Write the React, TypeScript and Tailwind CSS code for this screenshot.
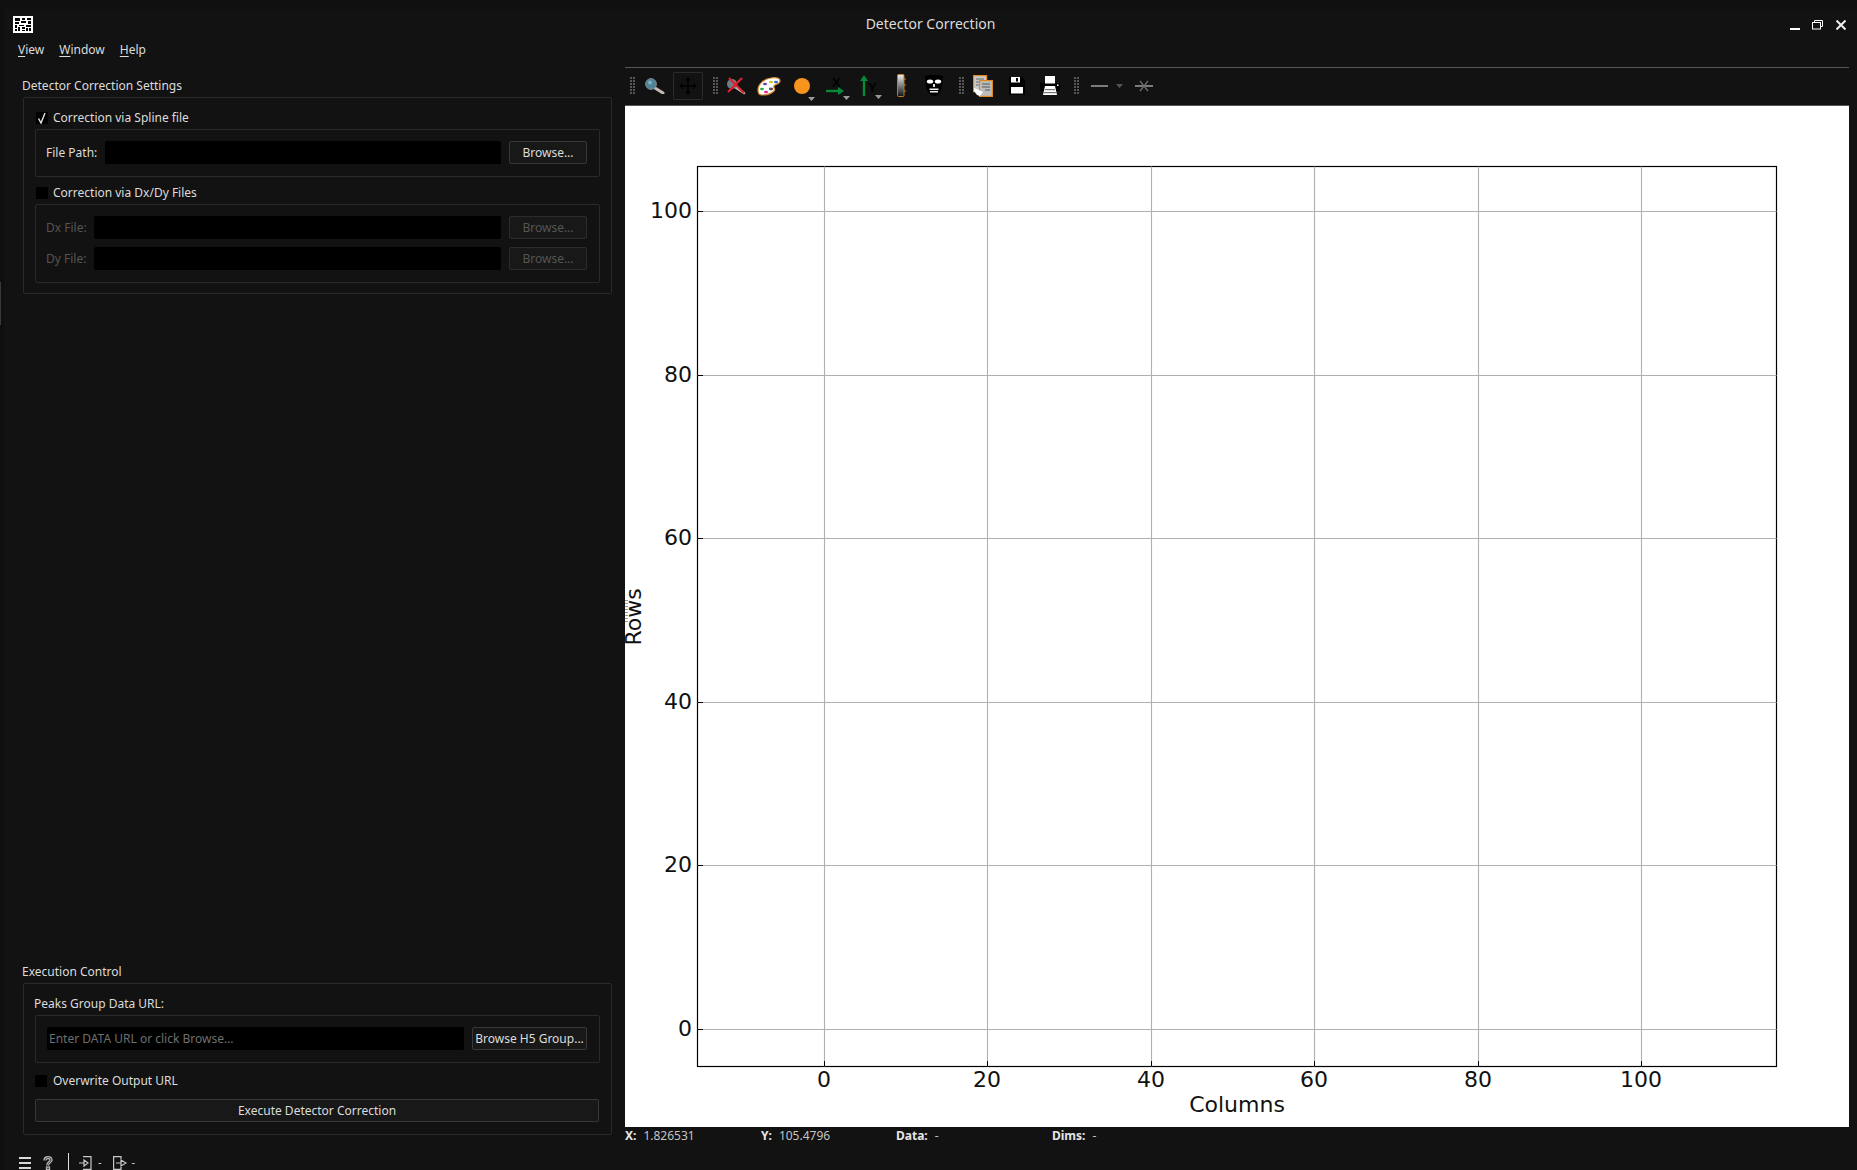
import type { ReactNode } from "react";

const xTicks = [
  { x: 199.5, label: "0" },
  { x: 362.5, label: "20" },
  { x: 526.5, label: "40" },
  { x: 689.5, label: "60" },
  { x: 853.5, label: "80" },
  { x: 1016.5, label: "100" },
];

const yTicks = [
  { y: 923.5, label: "0" },
  { y: 759.5, label: "20" },
  { y: 596.5, label: "40" },
  { y: 432.5, label: "60" },
  { y: 269.5, label: "80" },
  { y: 105.5, label: "100" },
];

function Chart() {
  return (
    <svg width="1224" height="1021" viewBox="0 0 1224 1021" className="block">
      <rect x="72.5" y="60.5" width="1079" height="900" fill="white" stroke="black" strokeWidth="1.2" />
      {xTicks.map((t) => (
        <g key={t.label}>
          <line x1={t.x} x2={t.x} y1="60.5" y2="960.5" stroke="#b0b0b0" strokeWidth="1.1" />
          <line x1={t.x} x2={t.x} y1="955" y2="960.5" stroke="black" />
          <text x={t.x - 0.5} y="981" textAnchor="middle" fontFamily="'DejaVu Sans', sans-serif" fontSize="22" fill="#111">
            {t.label}
          </text>
        </g>
      ))}
      {yTicks.map((t) => (
        <g key={t.label}>
          <line x1="72.5" x2="1151.5" y1={t.y} y2={t.y} stroke="#b0b0b0" strokeWidth="1.1" />
          <line x1="72.5" x2="78" y1={t.y} y2={t.y} stroke="black" />
          <text x="67" y={t.y + 6.5} textAnchor="end" fontFamily="'DejaVu Sans', sans-serif" fontSize="22" fill="#111">
            {t.label}
          </text>
        </g>
      ))}
      <text x="612" y="1006" textAnchor="middle" fontFamily="'DejaVu Sans', sans-serif" fontSize="22" fill="#111">
        Columns
      </text>
      <text
        transform="translate(16 511) rotate(-90)"
        textAnchor="middle"
        fontFamily="'DejaVu Sans', sans-serif"
        fontSize="22"
        fill="#111"
      >
        Rows
      </text>
    </svg>
  );
}

function Grip({ className = "" }: { className?: string }) {
  const dots = [0, 1, 2, 3, 4, 5];
  return (
    <svg width="5" height="17" viewBox="0 0 5 17" className={className}>
      {dots.map((d) => (
        <g key={d} fill="#565656">
          <rect x="0" y={d * 3} width="2" height="2" />
          <rect x="3" y={d * 3} width="2" height="2" />
        </g>
      ))}
    </svg>
  );
}

function Caret({ className = "", color = "#9a9a9a" }: { className?: string; color?: string }) {
  return (
    <svg width="7" height="4" viewBox="0 0 7 4" className={className}>
      <path d="M0 0h7L3.5 4z" fill={color} />
    </svg>
  );
}

function Magnifier() {
  return (
    <svg width="20" height="16" viewBox="0 0 20 16">
      <path d="M10 10l8 5" stroke="#c9b9b4" strokeWidth="3" strokeLinecap="round" />
      <circle cx="6" cy="6" r="5.4" fill="#4f8496" stroke="#7b8a90" strokeWidth="1" />
      <circle cx="5" cy="4.6" r="2" fill="#7fb0c0" />
    </svg>
  );
}

function PanIcon() {
  return (
    <svg width="18" height="18" viewBox="0 0 18 18" fill="#000" stroke="#000">
      <path d="M9 2v14M2 9h14" strokeWidth="1.6" fill="none" />
      <path d="M9 0l3 3.5H6zM9 18l3-3.5H6zM0 9l3.5-3v6zM18 9l-3.5-3v6z" stroke="none" />
    </svg>
  );
}

function NoZoom() {
  return (
    <svg width="20" height="18" viewBox="0 0 20 18">
      <path d="M9 10l9 6" stroke="#b8b8b8" strokeWidth="2.5" strokeLinecap="round" />
      <circle cx="6" cy="7" r="5" fill="#6d7d84" />
      <path d="M2 15L16 1M3 1l15 15" stroke="#e0202c" strokeWidth="2.2" />
    </svg>
  );
}

function Palette() {
  return (
    <svg width="24" height="20" viewBox="0 0 24 20">
      <path
        d="M1 14C1 8 7 3 14 2c5-1 9 0 9 3 0 3-5 3-6 5-1 2 2 3 0 5-3 3-9 4-12 4-3 0-4-2-4-5z"
        fill="#fff"
        stroke="#d98a2b"
        strokeWidth="1.2"
      />
      <ellipse cx="8" cy="8" rx="2" ry="1.3" fill="#6a3fb0" />
      <ellipse cx="14" cy="6" rx="2" ry="1.3" fill="#c8c820" />
      <ellipse cx="19" cy="6" rx="2" ry="1.3" fill="#2a6fc0" />
      <ellipse cx="5" cy="13" rx="2" ry="1.2" fill="#2ab04a" />
      <ellipse cx="9" cy="16" rx="2" ry="1.2" fill="#e02090" />
      <ellipse cx="14" cy="13" rx="2.2" ry="1.4" fill="#555" />
    </svg>
  );
}

function XAxisIcon() {
  return (
    <svg width="20" height="20" viewBox="0 0 20 20">
      <text x="6" y="11" fontFamily="'Liberation Sans', sans-serif" fontWeight="700" fontSize="13" fill="#000">
        X
      </text>
      <path d="M0 15h13" stroke="#06893a" strokeWidth="2.4" />
      <path d="M12 11l6 4-6 4z" fill="#06893a" />
    </svg>
  );
}

function YAxisIcon() {
  return (
    <svg width="22" height="22" viewBox="0 0 22 22">
      <path d="M5 5v16" stroke="#06893a" strokeWidth="2.4" />
      <path d="M1 6l4-6 4 6z" fill="#06893a" />
      <text x="9" y="17" fontFamily="'Liberation Sans', sans-serif" fontWeight="700" fontSize="13" fill="#000">
        Y
      </text>
    </svg>
  );
}

function Colorbar() {
  return (
    <svg width="9" height="23" viewBox="0 0 9 23">
      <defs>
        <linearGradient id="cb" x1="0" y1="0" x2="0" y2="1">
          <stop offset="0" stopColor="#eee" />
          <stop offset="1" stopColor="#111" />
        </linearGradient>
      </defs>
      <rect x="0.5" y="0.5" width="6.5" height="22" rx="1" fill="url(#cb)" stroke="#c47a22" />
      <path d="M7 5h2M7 11h2M7 17h2" stroke="#c47a22" />
    </svg>
  );
}

function Mask() {
  return (
    <svg width="18" height="21" viewBox="0 0 18 21">
      <path d="M0 1c6-1.500 12-1.500 18 0 0 9-2 20-9 20S0 10 0 1z" fill="#000" />
      <ellipse cx="5" cy="6.500" rx="3.200" ry="2.100" fill="#fff" />
      <ellipse cx="13" cy="6.500" rx="3.200" ry="2.100" fill="#fff" />
      <rect x="8" y="9" width="2" height="3" fill="#ddd" />
      <rect x="4.500" y="13.500" width="9" height="1.500" fill="#eee" />
      <rect x="5" y="16" width="8" height="1.500" fill="#eee" />
    </svg>
  );
}

function CopyIcon() {
  return (
    <svg width="20" height="22" viewBox="0 0 20 22">
      <rect x="0.600" y="0.600" width="13" height="16" fill="#c9c9c9" stroke="#e08a25" strokeWidth="1.200" />
      <path d="M3 4h8M3 7h8M3 10h6" stroke="#666" />
      <rect x="6.600" y="5.600" width="12.800" height="15.800" fill="#bdbdbd" stroke="#e08a25" strokeWidth="1.200" />
      <path d="M9 9h8M9 12h8M12 15h5" stroke="#555" />
      <path d="M1 13l5 2 4 2-3 4-3-1-3-4z" fill="#fff" />
    </svg>
  );
}

function SaveIcon() {
  return (
    <svg width="16" height="18" viewBox="0 0 16 18">
      <path d="M0 0h13l3 3v15H0z" fill="#000" />
      <rect x="2" y="0" width="9" height="5.500" fill="#fff" />
      <rect x="7" y="1" width="2" height="3.500" fill="#000" />
      <rect x="2" y="10" width="12" height="6.500" fill="#fff" />
    </svg>
  );
}

function PrintIcon() {
  return (
    <svg width="20" height="20" viewBox="0 0 20 20">
      <path d="M0 7h20v8H0z" fill="#000" />
      <rect x="5" y="0" width="10" height="7.500" fill="#fff" />
      <path d="M5 10h10l2 9H3z" fill="#fff" />
      <rect x="5" y="13" width="10" height="1.200" fill="#777" />
      <rect x="4" y="16" width="12" height="1.200" fill="#777" />
      <rect x="17" y="8.500" width="1.500" height="1.500" fill="#fff" />
    </svg>
  );
}

function StarLine() {
  return (
    <svg width="18" height="12" viewBox="0 0 18 12">
      <path d="M0 6h18" stroke="#7c7c7c" strokeWidth="2" />
      <path d="M5 1l8 10M13 1L5 11" stroke="#6a6a6a" strokeWidth="1.400" />
    </svg>
  );
}

function Toolbar() {
  return (
    <div className="flex h-[37px] items-center pb-[2px]">
      <Grip className="ml-[5px]" />
      <div className="ml-[10px]">
        <Magnifier />
      </div>
      <div className="ml-[8px] flex h-[28px] w-[30px] items-center justify-center rounded-[2px] border border-[#2c2c2c]">
        <PanIcon />
      </div>
      <Grip className="ml-[10px]" />
      <div className="ml-[8px]">
        <NoZoom />
      </div>
      <div className="ml-[11px]">
        <Palette />
      </div>
      <div className="relative ml-[13px] h-[16px] w-[16px] rounded-full bg-[#f7941d]">
        <Caret className="absolute left-[14px] top-[19px]" />
      </div>
      <div className="relative ml-[16px] h-[20px] w-[20px]">
        <XAxisIcon />
        <Caret className="absolute left-[17px] top-[20px]" />
      </div>
      <div className="relative ml-[13px] h-[22px] w-[20px]">
        <YAxisIcon />
        <Caret className="absolute left-[16px] top-[20px]" />
      </div>
      <div className="ml-[18px] flex">
        <Colorbar />
      </div>
      <div className="ml-[19px] flex">
        <Mask />
      </div>
      <Grip className="ml-[16px]" />
      <div className="ml-[9px] flex">
        <CopyIcon />
      </div>
      <div className="ml-[16px] flex">
        <SaveIcon />
      </div>
      <div className="ml-[15px] flex">
        <PrintIcon />
      </div>
      <Grip className="ml-[14px]" />
      <div className="ml-[12px] h-[2px] w-[17px] bg-[#7c7c7c]" />
      <Caret className="ml-[8px]" color="#555" />
      <div className="ml-[12px] flex">
        <StarLine />
      </div>
    </div>
  );
}

function Check({ checked = false }: { checked?: boolean }) {
  return (
    <span className="flex h-[12px] w-[12px] shrink-0 items-center justify-center bg-black">
      {checked && (
        <svg width="11" height="12" viewBox="0 0 11 12">
          <path d="M1.500 6.500L4 11l4-10" fill="none" stroke="#e6e6e6" strokeWidth="1.400" />
        </svg>
      )}
    </span>
  );
}

function CheckRow({ label, checked, gap = "gap-[5px]", className = "" }: { label: string; checked?: boolean; gap?: string; className?: string }) {
  return (
    <div className={`flex h-[14px] items-center ${gap} ${className}`}>
      <Check checked={checked} />
      <span className="leading-none text-[#dcdcdc]">{label}</span>
    </div>
  );
}

function Browse({ label = "Browse...", disabled, w = "w-[78px]" }: { label?: string; disabled?: boolean; w?: string }) {
  return (
    <button
      className={`flex h-[23px] ${w} shrink-0 items-center justify-center rounded-[2px] border ${
        disabled ? "border-[#2c2c2c] text-[#555]" : "border-[#383838] text-[#dcdcdc]"
      } bg-[#181818]`}
    >
      {label}
    </button>
  );
}

function FileRow({ label, disabled }: { label: string; disabled?: boolean }) {
  return (
    <div className="flex h-[23px] items-center">
      <span className={`shrink-0 ${disabled ? "text-[#555]" : "text-[#dcdcdc]"}`}>{label}</span>
      <div className="ml-auto h-[23px] rounded-[2px] bg-black" style={{ width: disabled ? 407 : 396 }} />
      <div className="w-[8px] shrink-0" />
      <Browse disabled={disabled} />
    </div>
  );
}

function Inner({ children, className = "" }: { children: ReactNode; className?: string }) {
  return (
    <div className={`ml-[11px] w-[565px] rounded-[2px] border border-[#2a2a2a] pl-[10px] pr-[12px] pt-[11px] ${className}`}>
      {children}
    </div>
  );
}

function StatusPair({ name, value, width }: { name: string; value: string; width: string }) {
  return (
    <div className={`flex gap-[7px] ${width}`}>
      <span className="font-bold text-[#e6e6e6]">{name}</span>
      <span className="text-[#c4c4c4]">{value}</span>
    </div>
  );
}

function WindowButtons() {
  return (
    <div className="ml-auto mr-[11px] mt-[3px] flex items-center">
      <div className="ml-[1px] mt-[9px] h-[2px] w-[10px] bg-white" />
      <svg width="11" height="10" viewBox="0 0 11 10" className="ml-[12px]" fill="none" stroke="white">
        <path d="M2.500 2.500V.5h8v6H8" />
        <rect x="0.500" y="2.500" width="8" height="6.500" />
      </svg>
      <svg width="10" height="10" viewBox="0 0 10 10" className="ml-[13px]" stroke="#eee" strokeWidth="2">
        <path d="M.5.500l9 9M9.500.500l-9 9" />
      </svg>
    </div>
  );
}

function AppIcon() {
  return (
    <svg width="20" height="17" viewBox="0 0 20 17">
      <rect width="20" height="17" fill="#fff" />
      <path
        d="M2 2h5v3H2zM9 2h3v2H9zM14 2h4v2h-4zM8 5h5v2H8zM15 5h3v3h-3zM2 6h4v2H2zM2 9h2v3H2zM6 9h5v1H6zM13 9h5v2h-5zM5 11h2v4H5zM2 13h2v2H2zM9 11h3v2H9zM13 12h2v3h-2zM9 14h3v1H9zM16 12h2v3h-2z"
        fill="#000"
      />
    </svg>
  );
}

function BottomBar() {
  return (
    <div className="flex h-[17px] items-center pl-[15px] text-[#dcdcdc]">
      <div className="mt-[3px] flex h-[12px] w-[12px] flex-col justify-between">
        <div className="h-[2px] bg-[#d8d8d8]" />
        <div className="h-[2px] bg-[#d8d8d8]" />
        <div className="h-[2px] bg-[#d8d8d8]" />
      </div>
      <svg width="10" height="14" viewBox="0 0 10 14" className="ml-[12px] mt-[2px]" fill="none" stroke="#b8b8b8" strokeWidth="1.300">
        <path d="M1 4.500C1 2 3 .7 5 .7S9 2 9 4.300C9 6.500 5.500 6.500 5.500 9.500M3 4.500C3 3 4 2.500 5 2.500S7 3 7 4C7 5.500 3.700 6 3.700 9.500" />
        <rect x="3.500" y="11" width="3" height="2.500" />
      </svg>
      <div className="ml-[15px] h-[17px] w-[1px] bg-[#e0e0e0]" />
      <svg width="13" height="14" viewBox="0 0 13 14" className="ml-[10px] mt-[2px]" fill="none" stroke="#c8c8c8" strokeWidth="1.200">
        <path d="M4 .600h8v12.800H4M0 7h5M5 4l4 3-4 3z" />
      </svg>
      <span className="ml-[6px] mt-[2px] text-[11px]">-</span>
      <svg width="14" height="14" viewBox="0 0 14 14" className="ml-[11px] mt-[2px]" fill="none" stroke="#c8c8c8" strokeWidth="1.200">
        <path d="M8 3V.600H.600v12.800H8V11M3 7h5M8 4l5 3-5 3z" />
      </svg>
      <span className="ml-[5px] mt-[2px] text-[11px]">-</span>
    </div>
  );
}

export default function App() {
  return (
    <div className="relative flex h-[1170px] w-[1857px] flex-col overflow-hidden bg-[#121212] font-['Noto_Sans',sans-serif] text-[12px]">
      <div className="h-[9px] shrink-0 bg-[#0f0f0f]" />
      {/* title bar */}
      <div className="relative flex h-[31px] shrink-0 items-start pl-[13px] pt-[7px]">
        <AppIcon />
        <div className="absolute inset-x-0 top-[6px] pl-[4px] text-center text-[14px] leading-[18px] text-[#dcdcdc]">Detector Correction</div>
        <WindowButtons />
      </div>
      {/* menu */}
      <div className="flex h-[20px] shrink-0 items-center gap-[15px] pl-[18px] text-[#dcdcdc]">
        <span><span className="underline underline-offset-2">V</span>iew</span>
        <span><span className="underline underline-offset-2">W</span>indow</span>
        <span><span className="underline underline-offset-2">H</span>elp</span>
      </div>

      <div className="flex min-h-0 flex-1">
        {/* left panel */}
        <div className="flex w-[625px] shrink-0 flex-col pl-[4px]">
          <div className="ml-[18px] mt-[17px] h-[17px] leading-[17px] text-[#dcdcdc]">Detector Correction Settings</div>
          <div className="ml-[19px] mt-[3px] h-[197px] w-[589px] rounded-[2px] border border-[#2a2a2a]">
            <CheckRow label="Correction via Spline file" checked className="ml-[12px] mt-[13px]" />
            <Inner className="mt-[4px] h-[48px]">
              <FileRow label="File Path:" />
            </Inner>
            <CheckRow label="Correction via Dx/Dy Files" className="ml-[12px] mt-[9px]" />
            <Inner className="mt-[4px] h-[79px]">
              <FileRow label="Dx File:" disabled />
              <div className="h-[8px]" />
              <FileRow label="Dy File:" disabled />
            </Inner>
          </div>

          <div className="mt-auto ml-[18px] h-[17px] leading-[17px] text-[#dcdcdc]">Execution Control</div>
          <div className="ml-[19px] mt-[3px] h-[152px] w-[589px] rounded-[2px] border border-[#2a2a2a]">
            <div className="ml-[10px] mt-[11px] h-[17px] leading-[17px] text-[#dcdcdc]">Peaks Group Data URL:</div>
            <Inner className="mt-[3px] h-[48px]">
              <div className="flex gap-[8px] pl-[1px]">
                <div className="flex h-[23px] flex-1 items-center rounded-[2px] bg-black pl-[2px] text-[#6f6f6f]">Enter DATA URL or click Browse...</div>
                <Browse label="Browse H5 Group..." w="w-[115px]" />
              </div>
            </Inner>
            <CheckRow label="Overwrite Output URL" gap="gap-[6px]" className="ml-[11px] mt-[11px]" />
            <button className="ml-[11px] mt-[11px] flex h-[23px] w-[564px] items-center justify-center rounded-[2px] border border-[#383838] bg-[#181818] text-[#dcdcdc]">
              Execute Detector Correction
            </button>
          </div>
          <div className="mt-[18px]">
            <BottomBar />
          </div>
        </div>

        {/* plot panel */}
        <div className="flex w-[1224px] shrink-0 flex-col pt-[7px]">
          <div className="h-[1px] bg-[#555]" />
          <Toolbar />
          <div className="h-[1px] bg-[#555]" />
          <div className="relative h-[1021px] bg-white">
            <Chart />
            <div className="absolute left-0 top-[494px] h-[22px] w-[3px] bg-[repeating-linear-gradient(to_bottom,#999_0,#999_1px,transparent_1px,transparent_3px)]" />
          </div>
          <div className="flex text-[12px] leading-[17px]">
            <StatusPair name="X:" value="1.826531" width="w-[136px]" />
            <StatusPair name="Y:" value="105.4796" width="w-[135px]" />
            <StatusPair name="Data:" value="-" width="w-[156px]" />
            <StatusPair name="Dims:" value="-" width="w-[156px]" />
          </div>
        </div>
      </div>

      <div className="absolute left-0 top-0 h-full w-[4px] bg-[#0f0f0f]" />
      <div className="absolute left-0 top-[282px] h-[43px] w-[1px] bg-[#3a3a3a]" />
    </div>
  );
}
